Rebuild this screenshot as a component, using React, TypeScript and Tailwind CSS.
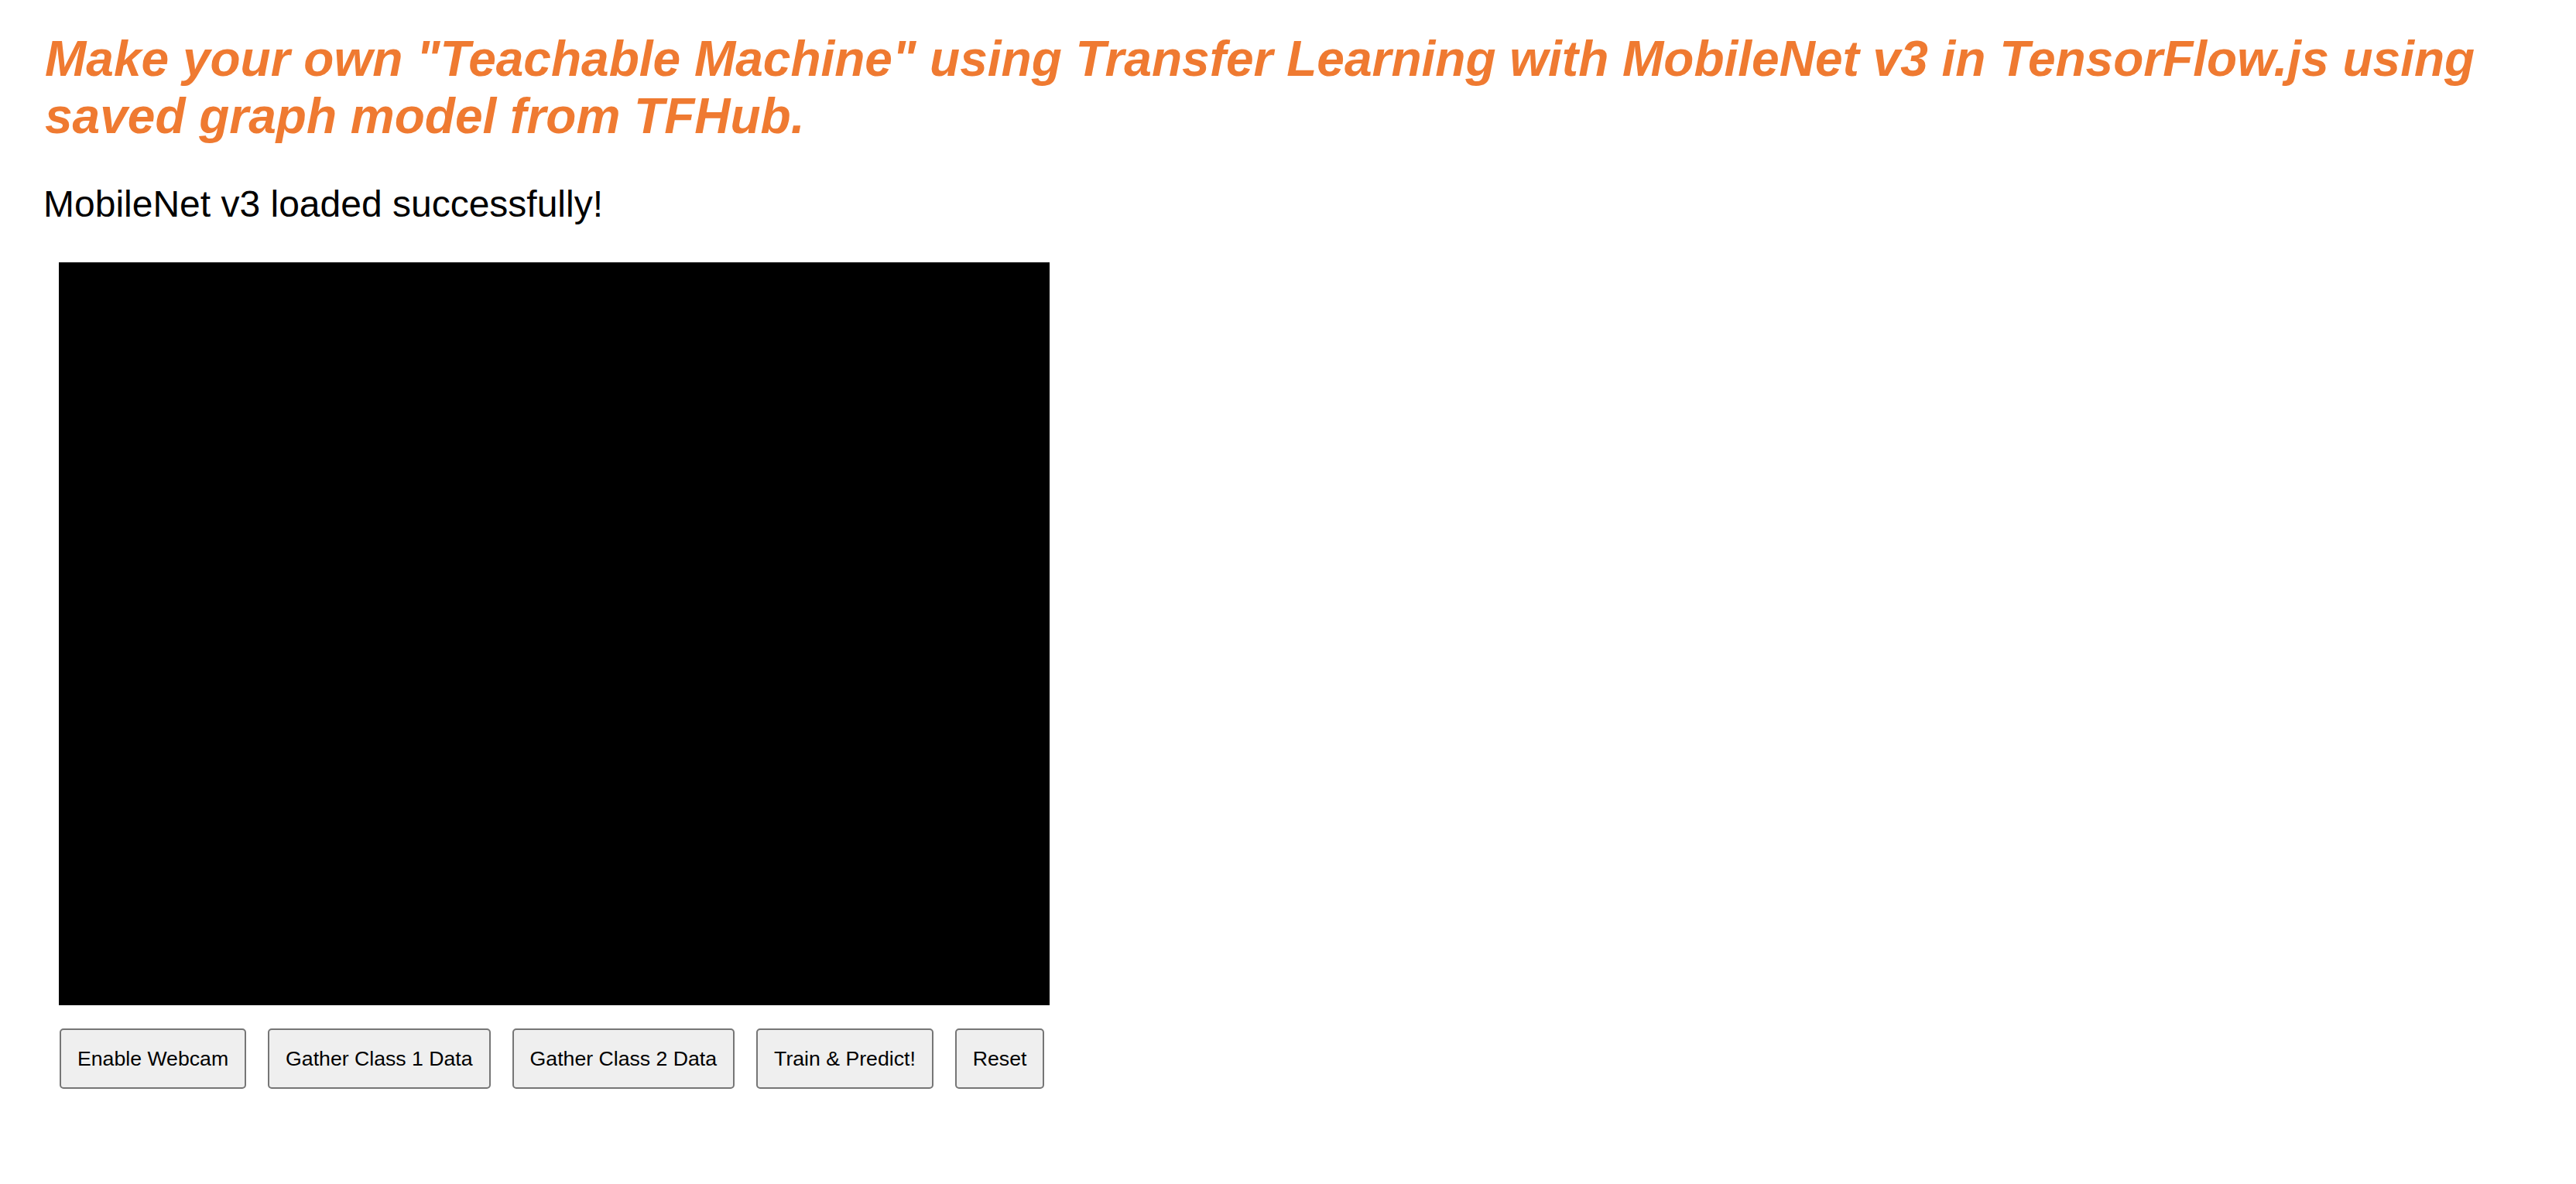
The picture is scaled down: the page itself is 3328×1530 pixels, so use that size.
import React from "react";

const buttons = [
  "Enable Webcam",
  "Gather Class 1 Data",
  "Gather Class 2 Data",
  "Train & Predict!",
  "Reset",
];

export default function App() {
  return (
    <div
      className="min-h-[1530px] w-full bg-white text-black"
      style={{ fontFamily: '"Liberation Sans", Arial, Helvetica, sans-serif' }}
    >
      <h1 className="pt-[40px] pl-[58px] text-[64px] leading-[73.6px] font-bold italic text-[#ef7a31]">
        Make your own "Teachable Machine" using Transfer Learning with MobileNet v3 in TensorFlow.js using
        <br />
        saved graph model from TFHub.
      </h1>
      <p className="mt-[49px] pl-[56px] text-[48px] leading-[55.2px]">
        MobileNet v3 loaded successfully!
      </p>
      <div className="mt-[48px] ml-[76px] h-[960px] w-[1280px] bg-black" />
      <div className="mt-[30px] ml-[77px] flex gap-[28px]">
        {buttons.map((b) => (
          <button
            key={b}
            className="flex h-[78px] items-center justify-center rounded-[5px] border-2 border-[#767676] bg-[#efefef] px-[21px] text-[26.6667px] leading-[30.6px] text-black"
          >
            {b}
          </button>
        ))}
      </div>
    </div>
  );
}
